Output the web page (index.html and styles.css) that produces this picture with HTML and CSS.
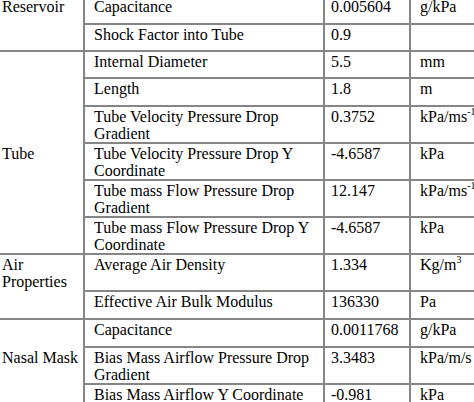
FILE: index.html
```html
<!DOCTYPE html>
<html lang="en">
<head>
<meta charset="utf-8">
<title>Model parameters</title>
<link rel="stylesheet" href="styles.css">
</head>
<body>
<table class="params">
  <colgroup>
    <col class="c1"><col class="c2"><col class="c3"><col class="c4">
  </colgroup>
  <tbody>
    <tr class="r28">
      <td class="group" rowspan="2">Reservoir</td>
      <td>Capacitance</td><td class="num">0.005604</td><td>g/kPa</td>
    </tr>
    <tr class="r27">
      <td>Shock Factor into Tube</td><td class="num">0.9</td><td></td>
    </tr>
    <tr class="r27">
      <td class="group tube" rowspan="6">Tube</td>
      <td>Internal Diameter</td><td class="num">5.5</td><td>mm</td>
    </tr>
    <tr class="r28">
      <td>Length</td><td class="num">1.8</td><td>m</td>
    </tr>
    <tr class="r36">
      <td>Tube Velocity Pressure Drop Gradient</td><td class="num">0.3752</td><td>kPa/ms<sup>-1</sup></td>
    </tr>
    <tr class="r37">
      <td>Tube Velocity Pressure Drop Y Coordinate</td><td class="num">-4.6587</td><td>kPa</td>
    </tr>
    <tr class="r37">
      <td>Tube mass Flow Pressure Drop Gradient</td><td class="num">12.147</td><td>kPa/ms<sup>-1</sup></td>
    </tr>
    <tr class="r36">
      <td>Tube mass Flow Pressure Drop Y Coordinate</td><td class="num">-4.6587</td><td>kPa</td>
    </tr>
    <tr class="r37">
      <td class="group" rowspan="2">Air Properties</td>
      <td>Average Air Density</td><td class="num">1.334</td><td>Kg/m<sup>3</sup></td>
    </tr>
    <tr class="r28">
      <td>Effective Air Bulk Modulus</td><td class="num">136330</td><td>Pa</td>
    </tr>
    <tr class="r28">
      <td class="group nasal" rowspan="3">Nasal Mask</td>
      <td>Capacitance</td><td class="num">0.0011768</td><td>g/kPa</td>
    </tr>
    <tr class="r36">
      <td>Bias Mass Airflow Pressure Drop Gradient</td><td class="num">3.3483</td><td>kPa/m/s</td>
    </tr>
    <tr class="r28">
      <td>Bias Mass Airflow Y Coordinate</td><td class="num">-0.981</td><td>kPa</td>
    </tr>
  </tbody>
</table>
</body>
</html>
```
FILE: styles.css
```css
html, body {
  margin: 0;
  padding: 0;
  background: #ffffff;
  overflow: hidden;
}

.params {
  border-collapse: collapse;
  table-layout: fixed;
  width: 509px;
  margin: -5px 0 0 -10px;
  font-family: "Liberation Serif", "Times New Roman", serif;
  font-size: 16px;
  line-height: 17px;
  color: #000000;
}

.c1 { width: 93px; }
.c2 { width: 240px; }
.c3 { width: 86px; }
.c4 { width: 90px; }

.params td {
  border: 2px solid #858585;
  vertical-align: top;
  padding: 1px 4px 0 9px;
  overflow: hidden;
}

.params td.num {
  padding-left: 6px;
}

.params td.group {
  padding-left: 10px;
}

.params td.tube {
  padding-top: 93px;
}

.params td.nasal {
  padding-top: 29px;
}

.params sup {
  font-size: 10px;
  line-height: 0;
  vertical-align: 7px;
}

.r27 { height: 27px; }
.r28 { height: 28px; }
.r36 { height: 36px; }
.r37 { height: 37px; }
```
